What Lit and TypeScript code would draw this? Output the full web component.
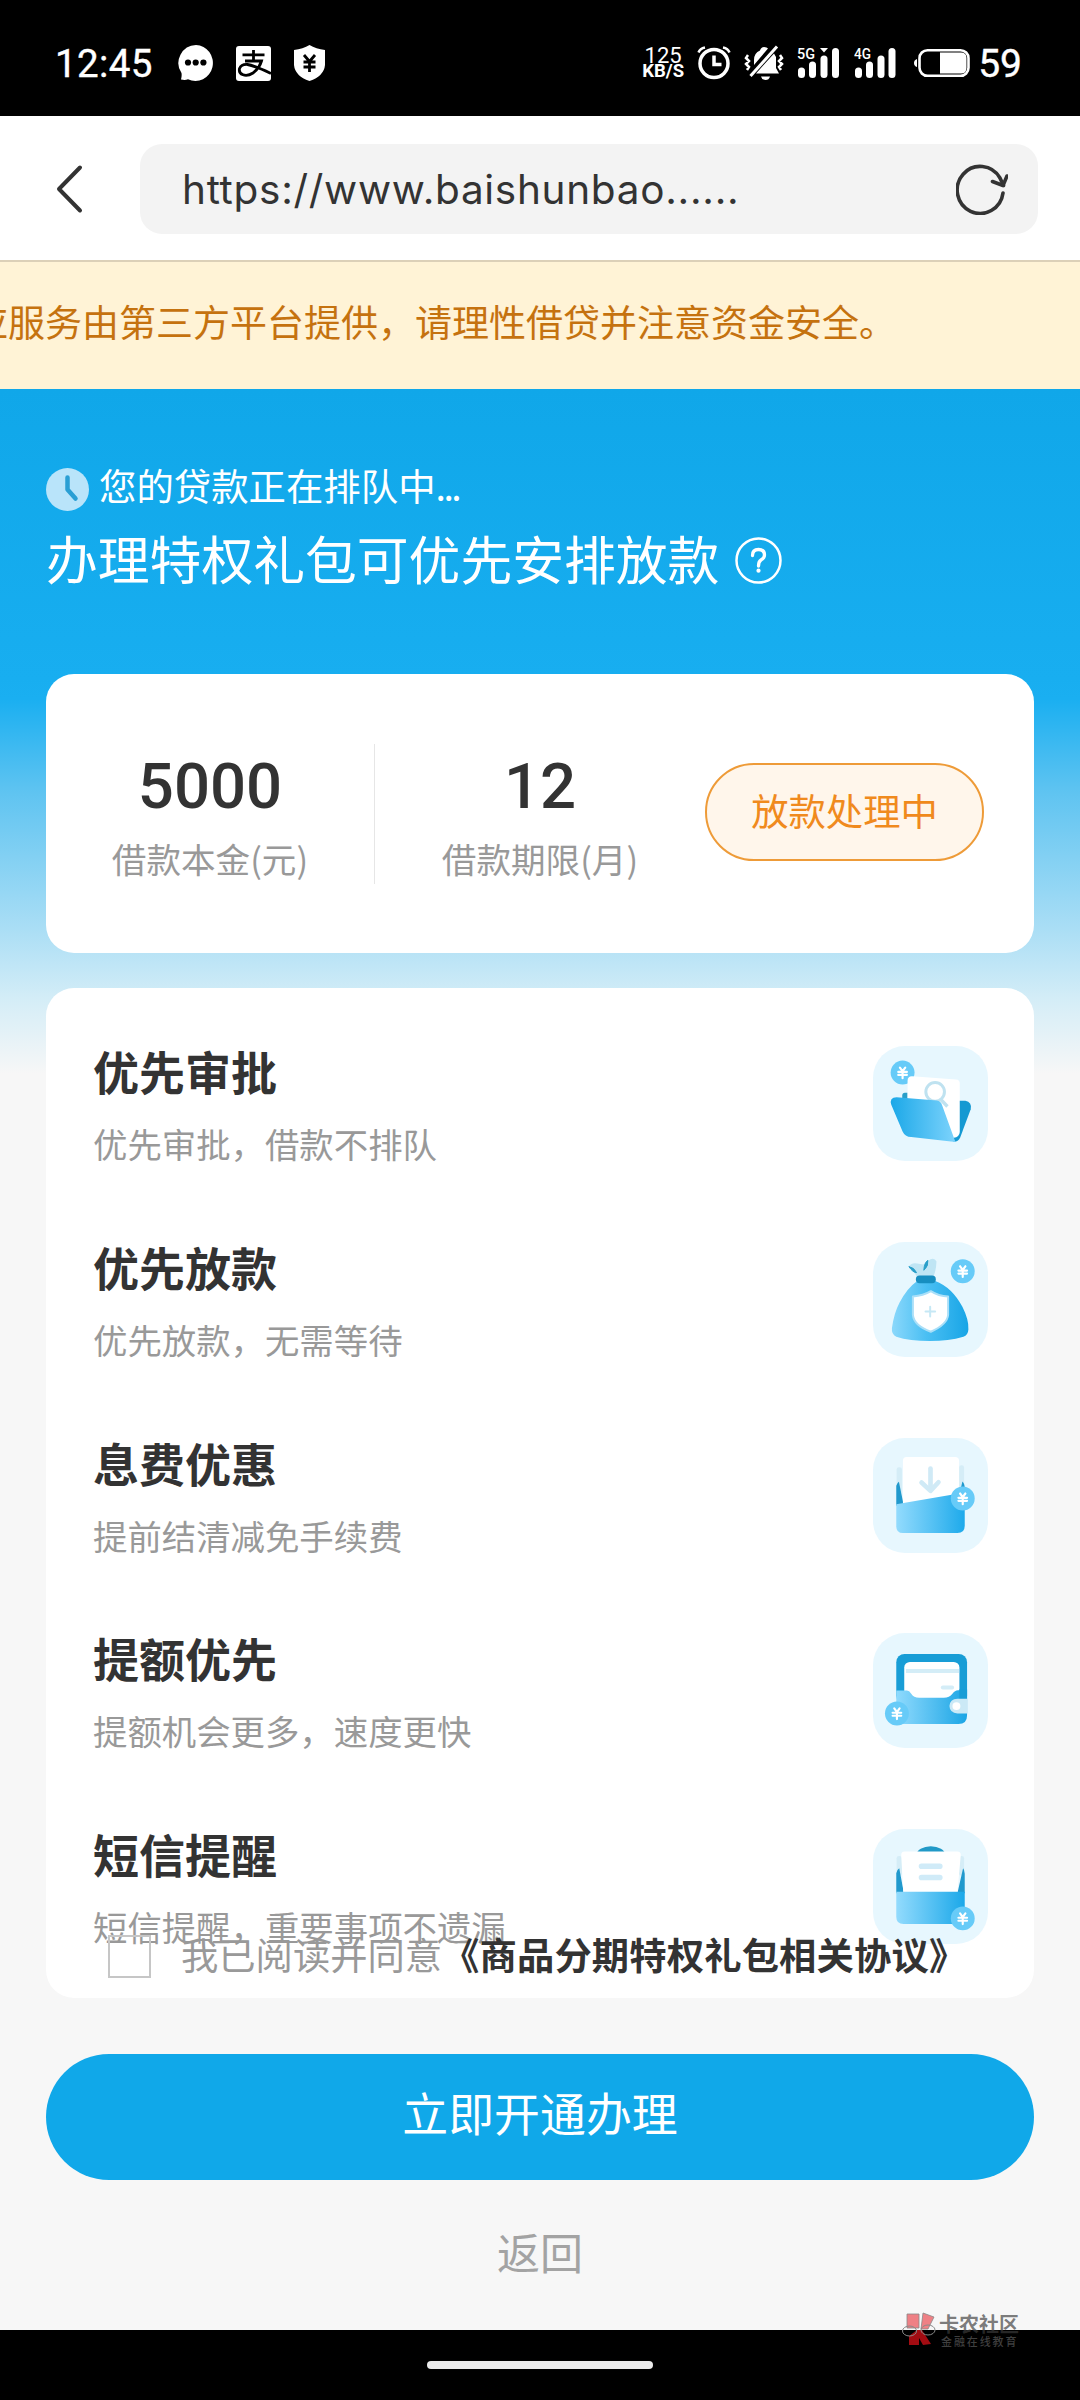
import { LitElement, html, css, svg } from "lit";
import { customElement } from "lit/decorators.js";

/* Yen coin: centre (x, y), shared by all benefit icons. */
const coin = (x: number, y: number, r = 36) => svg`
  <circle cx=${x} cy=${y} r=${r} fill="#67cbf8" />
  <path
    transform="translate(${x} ${y})"
    d="M-8-15 0-4 8-15M-13-2H13M-13 7H13M0-4V17"
    fill="none" stroke="#fff" stroke-width="6.5" stroke-linecap="round" />`;

const folderIcon = html`<svg class="icon" viewBox="68 77 346 346">
  <defs><linearGradient id="a" x1="0" x2="1"><stop offset="0" stop-color="#1ba8e8"/><stop offset="1" stop-color="#7dd3fc"/></linearGradient></defs>
  ${coin(157, 157)}
  <path d="M156 226q0-8 8-8h8v40h-16z" fill="#2a9fc9"/>
  <path d="M320 242h26q20 4 16 25l-32 86q-6 13-20 12z" fill="#1599d2"/>
  <path d="M172 182q0-14 13-14l133 10q11 1 11 12v146q-1 16-18 17L172 250z" fill="#fff"/>
  <circle cx="255" cy="215" r="28" fill="none" stroke="#bfe2f0" stroke-width="9"/>
  <path d="M272 238 292 259" stroke="#bfe2f0" stroke-width="10"/>
  <path d="M139 231 260 241q12 2 16 14l40 111-133-15q-19-1-26-17l-34-80q-7-22 16-23z" fill="url(#a)"/>
</svg>`;

const bagIcon = html`<svg class="icon" viewBox="68 663 346 346">
  <defs><linearGradient id="b" x1="0" x2="1"><stop offset="0" stop-color="#8bd8fb"/><stop offset=".45" stop-color="#4abff3"/><stop offset="1" stop-color="#18a5e6"/></linearGradient></defs>
  ${coin(338, 751)}
  <path d="M176 737q9-13 25-9l18 3 22-16q13-5 18 7-1 30-10 45h-49q-12-20-24-30z" fill="#bfe5f4"/>
  <path d="M176 737q16 3 23 18-10 1-23-18zM221 748q1-22 12-30 3 17-12 30z" stroke="#2a9fc9" stroke-width="3" fill="#2a9fc9"/>
  <path d="M201 780q27 8 54 0 51 19 82 78 20 40 18 68-1 17-15 22-45 13-100 13-62 0-102-13-15-7-13-26 6-45 23-77 22-43 53-65z" fill="url(#b)"/>
  <rect x="197" y="764" width="60" height="23" rx="11" fill="#178ec0"/>
  <path d="M242 811q23 15 52 16v55q-2 29-52 51-51-19-54-51v-55q31-2 54-16z" fill="#fff" stroke="#a9dff8" stroke-width="6" stroke-linejoin="round"/>
  <path d="M240 858v29M226 872h29" stroke="#c6e8f5" stroke-width="6" stroke-linecap="round"/>
</svg>`;

const feeIcon = html`<svg class="icon" viewBox="68 81 346 346">
  <defs><linearGradient id="c" x1="0" x2="1"><stop offset="0" stop-color="#93dbfd"/><stop offset="1" stop-color="#1eaaeb"/></linearGradient></defs>
  <rect x="139" y="169" width="16" height="80" rx="7" fill="#d5edf7"/>
  <rect x="327" y="163" width="15" height="80" rx="7" fill="#d5edf7"/>
  <path d="M138 285v-60q4-11 8-12l14 68zM328 250l9-38q7 6 7 20v40z" fill="#2199cd"/>
  <path d="M158 150q0-12 11-12h146q12 0 12 12v110L158 290z" fill="#fff"/>
  <path d="M241 173v62" stroke="#d0eaf6" stroke-width="14" stroke-linecap="round"/>
  <path d="M214 215 241 240 265 214" fill="none" stroke="#d0eaf6" stroke-width="14" stroke-linecap="round" stroke-linejoin="round"/>
  <path d="M138 280 344 245v100q0 22-22 22H158q-20 0-20-20z" fill="url(#c)"/>
  ${coin(338, 263)}
</svg>`;

const walletIcon = html`<svg class="icon" viewBox="68 669 346 346">
  <defs><linearGradient id="d" x1="0" x2="1"><stop offset="0" stop-color="#8fdafd"/><stop offset="1" stop-color="#1ba5e5"/></linearGradient></defs>
  <rect x="138" y="732" width="213" height="150" rx="25" fill="#189dd6"/>
  <rect x="162" y="756" width="166" height="125" rx="17" fill="#fff"/>
  <path d="M167 783h160" stroke="#d4edf7" stroke-width="12"/>
  <path d="M278 833h28" stroke="#d4edf7" stroke-width="12" stroke-linecap="round"/>
  <path d="M138 842h32q7 0 13 10 7 12 24 12h74q17 0 26-12 7-11 17-11h27v76q0 26-26 26H160q-22 0-22-22z" fill="url(#d)"/>
  <rect x="328" y="838" width="23" height="30" fill="#189dd6"/>
  <path d="M353 867h-31q-23 1-24 22 1 21 24 22h31z" fill="#cbe9f6"/>
  <circle cx="319" cy="889" r="12" fill="#fff"/>
  ${coin(140, 911)}
</svg>`;

const mailIcon = html`<svg class="icon" viewBox="68 87 346 346">
  <defs><linearGradient id="e" x1="0" x2="1"><stop offset="0" stop-color="#93dbfd"/><stop offset="1" stop-color="#1ba8e9"/></linearGradient></defs>
  <ellipse cx="242" cy="165" rx="43" ry="26" fill="#2199c7"/>
  <rect x="139" y="168" width="16" height="60" rx="7" fill="#d5edf7"/>
  <rect x="327" y="168" width="15" height="60" rx="7" fill="#d5edf7"/>
  <path d="M138 280v-60q3-12 9-15l14 75zM322 280l17-75q5 5 5 17v58z" fill="#2199cd"/>
  <path d="M153 167q-1-12 10-12h158q12 0 11 12l-10 110H159z" fill="#fff"/>
  <path d="M214 199h55M214 233h55" stroke="#d0ebf8" stroke-width="17" stroke-linecap="round"/>
  <path d="M138 276h206v75q0 22-22 22H160q-22 0-22-22z" fill="url(#e)"/>
  ${coin(338, 356)}
</svg>`;

const benefits = [
  { title: "优先审批", text: "优先审批，借款不排队", icon: folderIcon },
  { title: "优先放款", text: "优先放款，无需等待", icon: bagIcon },
  { title: "息费优惠", text: "提前结清减免手续费", icon: feeIcon },
  { title: "提额优先", text: "提额机会更多，速度更快", icon: walletIcon },
  { title: "短信提醒", text: "短信提醒，重要事项不遗漏", icon: mailIcon },
];

@customElement("status-bar")
class StatusBar extends LitElement {
  static styles = css`
    :host { display: flex; align-items: center; height: 116px; padding: 10px 58px 0 55px; box-sizing: border-box; background: #000; color: #fff; font-family: Roboto, sans-serif; }
    svg { display: block; flex: none; }
    .time { font-size: 38.5px; line-height: 40px; font-weight: 400; letter-spacing: 0.4px; width: 123px; padding-top: 2px; -webkit-text-stroke: 0.4px #fff; }
    .left { display: flex; gap: 22px; align-items: center; }
    .right { display: flex; align-items: center; margin-left: auto; }
    .speed { display: flex; flex-direction: column; align-items: center; font-size: 22px; line-height: 17px; font-weight: 400; width: 44px; }
    .unit { font-size: 18.5px; line-height: 15px; font-weight: 700; }
    .alarm { margin-left: 12px; }
    .bell { margin-left: 13px; }
    .sig5 { margin-left: 12px; }
    .sig4 { margin-left: 14px; }
    .battery { margin-left: 17px; }
    .level { font-size: 39px; line-height: 40px; font-weight: 400; margin-left: 7px; padding-top: 1px; -webkit-text-stroke: 0.4px #fff; }
    .net { font: 500 15px/15px Roboto, sans-serif; }
  `;
  render() {
    return html`
      <div class="time">12:45</div>
      <div class="left">
        <svg width="36" height="36" viewBox="0 0 36 36">
          <path d="M18 0A17.500 18 0 1 1 10 34.300Q7 35.500 3 34.500Q4 31 3.500 28A18 18 0 0 1 18 0z" fill="#fff"/>
          <circle cx="10" cy="17.500" r="3.100"/><circle cx="17.700" cy="17.500" r="3.100"/><circle cx="25.400" cy="17.500" r="3.100"/>
        </svg>
        <svg width="35" height="35" viewBox="0 0 35 35">
          <rect width="35" height="35" rx="3" fill="#fff"/>
          <path d="M6.500 8.800H28.500M17.500 4V15M9 15H25.500Q23.500 22 17 27Q11.500 30.500 7 28.800Q2.500 27 3.500 22.500Q5.500 18 11.500 18.500Q18 19.500 35 27.500" fill="none" stroke="#000" stroke-width="2.800"/>
        </svg>
        <svg width="33" height="36" viewBox="0 0 33 36">
          <path d="M16.500 0Q23 4 32 5V20Q31 31 16.500 36Q2 31 1 20V5Q10 4 16.500 0z" fill="#fff"/>
          <path d="M11 10 16.500 16.500 22 10M10.500 17H22.500M10.500 22H22.500M16.500 16.500V27" fill="none" stroke="#000" stroke-width="2.800"/>
        </svg>
      </div>
      <div class="right">
        <div class="speed"><span>125</span><span class="unit">KB/S</span></div>
        <svg class="alarm" width="34" height="34" viewBox="0 0 34 34" fill="none" stroke="#fff">
          <circle cx="17" cy="17.500" r="14" stroke-width="3.500"/>
          <path d="M17 9.500V18.500H24.500" stroke-width="3.500"/><path d="M1.500 6.500Q3 2.500 8 1.500M26 1.500Q31 2.500 32.500 6.500" stroke-width="2.500"/>
        </svg>
        <svg class="bell" width="41" height="36" viewBox="0 0 41 36">
          <path d="M10 20V15Q10 8 16 5.500Q17 2 20 2Q23 2 24 3.500zM12 28.500H35L32 23V12L30 8.500zM17 31.500H26Q25 35 21.500 35Q18 35 17 31.500z" fill="#fff"/>
          <path d="M6.500 31 33 1.500" stroke="#fff" stroke-width="3"/>
          <path d="M4 10 2 13 5 16 2 19 5 22 3 25M36 10 38 13 35 16 38 19 35 22 37 25" fill="none" stroke="#fff" stroke-width="2.500"/>
        </svg>
        <svg class="sig5" width="43" height="32" viewBox="0 0 43 32" fill="#fff">
          <text class="net" x="0" y="12" textLength="18" lengthAdjust="spacingAndGlyphs">5G</text>
          <rect x="1" y="20.500" width="7" height="10.500" rx="3.500"/><rect x="12" y="14.500" width="7" height="16.500" rx="3.500"/>
          <rect x="23.500" y="8.500" width="7" height="22.500" rx="3.500"/><rect x="35" y="1" width="7" height="30" rx="3.500"/>
          <path d="M23 1H31L27 5.500z"/>
        </svg>
        <svg class="sig4" width="43" height="32" viewBox="0 0 43 32" fill="#fff">
          <text class="net" x="0" y="12" textLength="17" lengthAdjust="spacingAndGlyphs">4G</text>
          <rect x="1" y="20.500" width="7" height="10.500" rx="3.500"/><rect x="12" y="14.500" width="7" height="16.500" rx="3.500"/>
          <rect x="23.500" y="8.500" width="7" height="22.500" rx="3.500"/><rect x="34.500" y="1" width="7" height="30" rx="3.500"/>
        </svg>
        <svg class="battery" width="57" height="30" viewBox="0 0 57 30">
          <path d="M3 11Q0 12 0 15Q0 18 3 19z" fill="#fff"/>
          <rect x="5.500" y="2.200" width="49" height="25.600" rx="8" fill="none" stroke="#fff" stroke-width="2.600"/>
          <path d="M26 4.500H47Q52.500 4.500 52.500 10V20Q52.500 25.500 47 25.500H26z" fill="#fff"/>
        </svg>
        <div class="level">59</div>
      </div>`;
  }
}

@customElement("address-bar")
class AddressBar extends LitElement {
  static styles = css`
    :host { display: flex; align-items: center; height: 144px; padding: 2px 42px 0 55px; box-sizing: border-box; background: #fff; }
    .back { width: 30px; height: 50px; margin-right: 55px; flex: none; }
    .field { flex: 1; display: flex; align-items: center; justify-content: space-between; height: 90px; padding: 0 30px 0 42px; box-sizing: border-box; border-radius: 22px; background: #f3f3f3; }
    .url { font: 400 40.5px/50px Inter, sans-serif; color: #333; letter-spacing: 0.7px; padding-top: 2px; }
  `;
  render() {
    return html`
      <svg class="back" viewBox="0 0 30 50" fill="none" stroke="#333" stroke-width="4" stroke-linecap="round" stroke-linejoin="round"><path d="M25 3.500 4 25 25 46.500"/></svg>
      <div class="field">
        <span class="url">https://www.baishunbao......</span>
        <svg width="52" height="52" viewBox="0 0 52 52" fill="none" stroke="#333" stroke-width="3.600" stroke-linecap="round" stroke-linejoin="round">
          <path d="M47 30A23 23.500 0 1 1 44 15L47.500 22.500"/><path d="M36.500 18.500 47 22.500 51 13"/>
        </svg>
      </div>`;
  }
}

@customElement("app-root")
class AppRoot extends LitElement {
  static styles = css`
    :host { display: block; width: 1080px; height: 2400px; position: relative; overflow: hidden; background: #f7f7f7; color: #333; font-family: "Noto Sans CJK SC", "Noto Sans", sans-serif; }
    svg { display: block; flex: none; }
    .screen { display: flex; flex-direction: column; height: 2400px; }
    .notice { height: 129px; box-sizing: border-box; border-top: 2px solid #dcd0b8; background: #fff3d6; color: #c5720f; display: flex; justify-content: flex-end; overflow: hidden; white-space: nowrap; padding-right: 184px; font-size: 37px; line-height: 119px; }
    .page { flex: 1; display: flex; flex-direction: column; padding: 0 46px; background: linear-gradient(#10a7e9 0, #18aef0 290px, #1aaff1 310px, #5dc3f1 400px, #aadef5 540px, #d4edf7 610px, #f7f7f7 685px); }
    .queue { display: flex; align-items: center; gap: 10px; margin-top: 76px; height: 48px; font-size: 37.4px; line-height: 48px; color: #fff; }
    .queue span { margin-top: -8px; }
    .queue .dots { letter-spacing: -2.5px; }
    .headline { display: flex; align-items: center; gap: 16px; height: 70px; margin-top: 12px; font-size: 51.8px; line-height: 70px; color: #fff; }
    .headline span { margin-top: -4px; }
    .card { background: #fff; border-radius: 28px; box-sizing: border-box; }
    .summary { margin-top: 79px; height: 279px; display: flex; align-items: center; padding-right: 50px; }
    .figure { display: flex; flex-direction: column; align-items: center; width: 328px; height: 140px; box-sizing: border-box; }
    .figure + .figure { border-left: 1px solid #e6e6e6; width: 331px; }
    .number { font: 500 63.5px/64px Roboto, sans-serif; margin-top: 11px; }
    .label { font-size: 34.600px; line-height: 40px; color: #999; margin-top: 19px; }
    .state { margin: -4px 0 0 auto; width: 279px; height: 98px; box-sizing: border-box; border: 2px solid #ee9b38; border-radius: 49px; background: #fff6eb; color: #f08a1d; font-size: 37.3px; line-height: 90px; text-align: center; }
    .benefits { margin-top: 35px; height: 1010px; padding: 58px 46px 0 47px; display: flex; flex-direction: column; gap: 80.8px; position: relative; }
    .row { display: flex; justify-content: space-between; height: 115px; }
    .name { font-size: 46px; line-height: 54px; font-weight: 700; margin-top: -3px; }
    .desc { font-size: 34.400px; line-height: 40px; color: #999; margin-top: 26px; }
    .icon { width: 115px; height: 115px; border-radius: 32px; background: #e7f7fe; }
    .agree { position: absolute; left: 62px; top: 946px; display: flex; align-items: center; height: 45px; font-size: 37.300px; line-height: 45px; color: #999; white-space: nowrap; }
    .box { width: 43px; height: 43px; box-sizing: border-box; border: 2px solid #c6c6c6; margin-right: 30px; }
    .agree b { font-weight: 700; color: #333; }
    .agree span, .agree b { margin-top: -4px; }
    .agree b { letter-spacing: 0.15px; }
    .primary { margin-top: 56px; height: 126px; border-radius: 63px; background: #10a8e9; color: #fff; font-size: 45.900px; line-height: 115px; text-align: center; }
    .return { margin-top: 41px; font-size: 43px; line-height: 60px; text-align: center; color: #a3a3a3; }
    .home { height: 70px; background: #000; display: flex; align-items: center; justify-content: center; }
    .handle { width: 226px; height: 8px; border-radius: 4px; background: #ebebeb; }
    .mark { position: absolute; left: 902px; top: 2312px; display: flex; gap: 2px; color: rgba(60, 60, 60, 0.68); white-space: nowrap; }
    .brand { font-size: 20px; line-height: 20px; font-weight: 700; margin-top: 2px; }
    .slogan { font-size: 11px; line-height: 12px; letter-spacing: 1.900px; font-weight: 500; margin: 1px 0 0 2px; color: rgba(85, 85, 85, 0.75); }
  `;
  render() {
    return html`
      <div class="screen">
        <status-bar></status-bar>
        <address-bar></address-bar>
        <div class="notice">应服务由第三方平台提供，请理性借贷并注意资金安全。</div>
        <main class="page">
          <div class="queue">
            <svg width="43" height="43" viewBox="0 0 43 43"><circle cx="21.500" cy="21.500" r="21.500" fill="#b9e4fa"/><path d="M21.500 9.500V21.500L29.500 30.500" fill="none" stroke="#2a9fd4" stroke-width="4.500" stroke-linecap="round" stroke-linejoin="round"/></svg>
            <span>您的贷款正在排队中<span class="dots">...</span></span>
          </div>
          <div class="headline">
            <span>办理特权礼包可优先安排放款</span>
            <svg width="47" height="47" viewBox="0 0 47 47" fill="none" stroke="#fff"><circle cx="23.500" cy="23.500" r="22" stroke-width="2.500"/><path d="M17.500 18.500Q17.500 12.500 23.500 12.500Q29.500 12.500 29.500 18Q29.500 21 26 23Q23.500 24.500 23.500 29" stroke-width="3.300" stroke-linecap="round"/><circle cx="23.500" cy="33.700" r="2.100" fill="#fff" stroke="none"/></svg>
          </div>
          <section class="card summary">
            <div class="figure"><span class="number">5000</span><span class="label">借款本金(元)</span></div>
            <div class="figure"><span class="number">12</span><span class="label">借款期限(月)</span></div>
            <div class="state">放款处理中</div>
          </section>
          <section class="card benefits">
            ${benefits.map(
              (b) => html`<div class="row">
                <div><div class="name">${b.title}</div><div class="desc">${b.text}</div></div>
                ${b.icon}
              </div>`
            )}
            <div class="agree"><i class="box"></i><span>我已阅读并同意</span><b>《商品分期特权礼包相关协议》</b></div>
          </section>
          <div class="primary">立即开通办理</div>
          <div class="return">返回</div>
        </main>
        <div class="home"><div class="handle"></div></div>
      </div>
      <div class="mark">
        <svg width="35" height="34" viewBox="0 0 35 34">
          <path d="M5 2H17V16H5zM21 1 32 5 26 17H19z" fill="#ef8085" stroke="#888" stroke-width=".8"/>
          <path d="M7 24 15 18H20L29 32 21 33 17 26V33H7z" fill="#a30c12"/>
          <ellipse cx="7.500" cy="19" rx="7" ry="5" fill="none" stroke="#8a8a8a"/><ellipse cx="26" cy="18" rx="7" ry="5" fill="none" stroke="#8a8a8a"/>
        </svg>
        <div><div class="brand">卡农社区</div><div class="slogan">金融在线教育</div></div>
      </div>`;
  }
}
